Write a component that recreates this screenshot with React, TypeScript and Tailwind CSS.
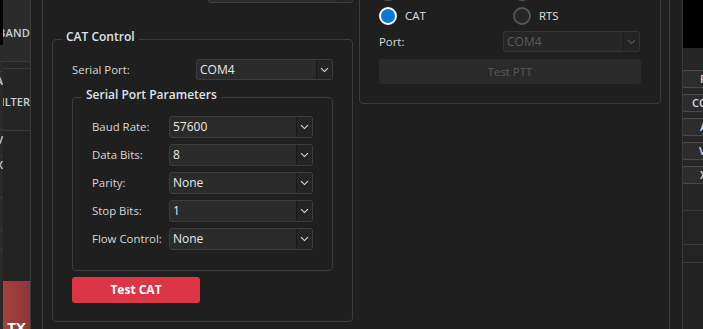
import React from "react";

function Chevron({ dim = false }: { dim?: boolean }) {
  return (
    <svg width="9" height="6" viewBox="0 0 9 6">
      <path d="M1 1.2 L4.5 4.6 L8 1.2" fill="none" stroke={dim ? "#5a5a5a" : "#d6dde6"} strokeWidth="1.1" />
    </svg>
  );
}

function Combo({ value, className, disabled = false }: { value: string; className: string; disabled?: boolean }) {
  return (
    <div
      className={
        "flex items-stretch rounded-[3px] border " +
        (disabled ? "border-[#343434] bg-[#262626] text-[#5c5c5c] " : "border-[#3c3c3c] bg-[#2b2b2b] text-[#e8e8e8] ") +
        className
      }
    >
      <div className="flex flex-1 items-center pl-[3px] text-[12px] leading-none">{value}</div>
      <div
        className={
          "flex w-[16px] items-center justify-center rounded-r-[2px] border-l " +
          (disabled ? "border-[#1e1e1e] bg-[#242424]" : "border-[#1a1a1a] bg-[#242424]")
        }
      >
        <Chevron dim={disabled} />
      </div>
    </div>
  );
}

function ParamRow({ label, value }: { label: string; value: string }) {
  return (
    <div className="flex items-center">
      <div className="w-[77px] text-[11.4px] text-[#d8d8d8]">{label}</div>
      <Combo value={value} className="h-[22px] w-[144px]" />
    </div>
  );
}

export default function App() {
  return (
    <div className="flex h-[329px] w-[703px] overflow-hidden bg-[#1f1f1f] font-['Open_Sans',sans-serif]">
      {/* left sidebar */}
      <div className="flex w-[31px] shrink-0 border-r border-[#3a3a3a]">
        <div className="flex w-[3px] flex-col overflow-hidden bg-[#2a2a2a]">
          <div className="h-[45px] bg-black" />
          <div className="h-[17px] border-b border-[#3a3a3a]" />
          <div className="h-[10px] border-b border-[#3a3a3a]" />
          <div className="flex h-[18px] items-center justify-end text-[11px] font-semibold text-[#c8d0dc]">A</div>
          <div className="h-[40px] border-b border-[#3a3a3a]" />
          <div className="flex h-[20px] items-center justify-end text-[11px] font-semibold text-[#c8d0dc]">V</div>
          <div className="h-[6px] border-b border-[#3a3a3a]" />
          <div className="flex h-[18px] items-center justify-end text-[11px] font-semibold text-[#c8d0dc]">X</div>
          <div className="h-[24px] border-b border-[#3a3a3a]" />
          <div className="h-[33px] border-b border-[#3a3a3a]" />
          <div className="h-[19px] border-b border-[#3a3a3a]" />
          <div className="flex-1" />
        </div>
        <div className="flex w-[27px] flex-col">
          <div className="flex h-[62px] items-center justify-end overflow-hidden border-b border-[#3a3a3a] bg-[#2b2b2b] pt-[6px]">
            <span className="text-[11px] font-semibold tracking-[0.2px] text-[#c8d0dc]">BAND</span>
          </div>
          <div className="h-[7px] border-b border-[#3a3a3a] bg-[#262626]" />
          <div className="flex h-[62px] items-end justify-end overflow-hidden border-b border-[#3a3a3a] bg-[#262626] pb-[20px]">
            <span className="text-[11px] font-semibold text-[#c8d0dc]">FILTER</span>
          </div>
          <div className="h-[150px] bg-[#232323]" />
          <div className="flex flex-1 items-end justify-center bg-gradient-to-r from-[#a8413f] to-[#8a3737]">
            <span className="-mb-[9px] text-[15px] font-bold text-white">TX</span>
          </div>
        </div>
      </div>
      <div className="w-[12px] shrink-0 border-r border-[#3a3a3a]" />

      {/* main */}
      <div className="flex w-[626px] shrink-0 items-start gap-[6px] pl-[9px]">
        {/* left column */}
        <div className="-mt-[18px] flex w-[301px] flex-col">
          <div className="flex justify-end">
            <Combo value="" className="h-[21px] w-[145px]" />
          </div>
          <fieldset className="mt-[26px] rounded-[4px] border border-[#3c3c3c] p-0">
            <legend className="ml-[9px] px-[4px] pb-[5px] text-[12px] leading-[16px] font-semibold text-[#dfe4ea]">CAT Control</legend>
            <div className="flex flex-col px-[19px] pt-[9px] pb-[18px]">
              <div className="flex items-center">
                <div className="w-[124px] text-[11.4px] text-[#d8d8d8]">Serial Port:</div>
                <Combo value="COM4" className="h-[21px] w-[137px]" />
              </div>
              <fieldset className="mt-[7px] rounded-[4px] border border-[#3c3c3c] p-0">
                <legend className="ml-[9px] px-[4px] pb-[5px] text-[12px] leading-[16px] font-semibold text-[#dfe4ea]">
                  Serial Port Parameters
                </legend>
                <div className="flex flex-col gap-[6px] px-[19px] pt-[8px] pb-[20px]">
                  <ParamRow label="Baud Rate:" value="57600" />
                  <ParamRow label="Data Bits:" value="8" />
                  <ParamRow label="Parity:" value="None" />
                  <ParamRow label="Stop Bits:" value="1" />
                  <ParamRow label="Flow Control:" value="None" />
                </div>
              </fieldset>
              <button className="mt-[6px] flex h-[26px] w-[128px] items-center justify-center rounded-[3px] bg-[#dc3545] text-[12px] font-bold text-white">
                Test CAT
              </button>
            </div>
          </fieldset>
        </div>

        {/* right column */}
        <div className="-mt-[40px] flex w-[302px] flex-col rounded-[4px] border border-[#3c3c3c] px-[19px] pt-[22px] pb-[19px]">
          <div className="grid grid-cols-[134px_1fr] gap-y-[6px]">
            <div className="flex h-[18px] items-center gap-[8px]">
              <div className="h-[18px] w-[18px] rounded-full border-2 border-[#555] bg-[#262626]" />
            </div>
            <div className="flex h-[18px] items-center gap-[8px]">
              <div className="h-[18px] w-[18px] rounded-full border-2 border-[#555] bg-[#262626]" />
            </div>
            <div className="flex h-[18px] items-center gap-[8px]">
              <div className="h-[18px] w-[18px] rounded-full border-[2.5px] border-white bg-[#0a78d4]" />
              <span className="text-[11.4px] text-[#e0e0e0]">CAT</span>
            </div>
            <div className="flex h-[18px] items-center gap-[8px]">
              <div className="h-[18px] w-[18px] rounded-full border-2 border-[#555] bg-[#262626]" />
              <span className="text-[11.4px] text-[#e0e0e0]">RTS</span>
            </div>
          </div>
          <div className="mt-[6px] flex items-center">
            <div className="w-[124px] text-[11.4px] text-[#d8d8d8]">Port:</div>
            <Combo value="COM4" className="h-[21px] w-[137px]" disabled />
          </div>
          <button className="mt-[7px] flex h-[25px] w-full items-center justify-center rounded-[3px] bg-[#2a2a2a] text-[11.4px] text-[#5a5a5a]">
            Test PTT
          </button>
        </div>
      </div>

      <div className="w-[14px] shrink-0 border-x border-[#3a3a3a]" />

      {/* right strip */}
      <div className="flex w-[20px] shrink-0 flex-col overflow-hidden">
        <div className="h-[48px] bg-black" />
        <div className="flex h-[162px] flex-col gap-[6px] bg-[#262626] pt-[22px]">
          {[
            ["pl-[17px]", "F"],
            ["pl-[9px]", "CO"],
            ["pl-[17px]", "A"],
            ["pl-[16px]", "V"],
            ["pl-[17px]", "X"],
          ].map(([pad, t], i) => (
            <div
              key={i}
              className={"-ml-[1px] flex h-[18px] w-[40px] shrink-0 items-center rounded-[3px] border border-[#4a4a4a] bg-[#2c2c2c] text-[11px] font-semibold text-[#d6dde6] " + pad}
            >
              {t}
            </div>
          ))}
        </div>
        <div className="h-[34px] border-t border-[#3a3a3a] bg-[#242424]" />
        <div className="h-[18px] border-t border-[#3a3a3a] bg-[#242424]" />
        <div className="flex-1 border-t border-[#3a3a3a] bg-[#222]" />
      </div>
    </div>
  );
}
